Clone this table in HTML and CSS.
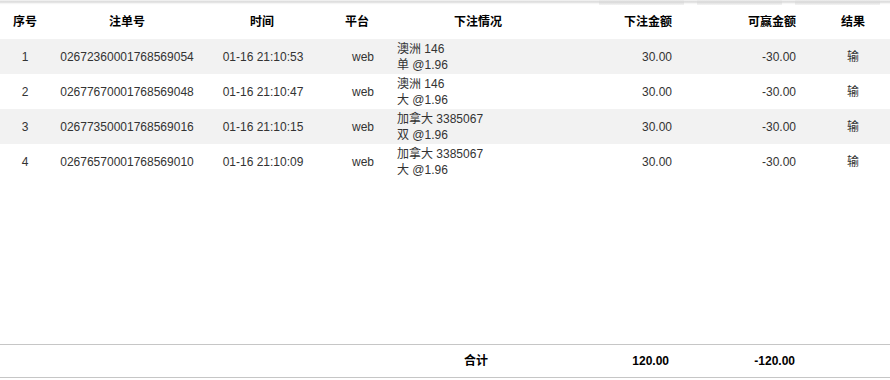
FILE: index.html
```html
<!DOCTYPE html>
<html lang="zh">
<head>
<meta charset="utf-8">
<link rel="stylesheet" href="styles.css">
</head>
<body>
<div class="page">
  <div class="topbar">
    <span class="ghost-btn"></span>
    <span class="ghost-btn"></span>
    <span class="ghost-btn"></span>
  </div>
  <div class="row head">
    <div class="c center">序号</div>
    <div class="c center">注单号</div>
    <div class="c center">时间</div>
    <div class="c center">平台</div>
    <div class="c center">下注情况</div>
    <div class="c right">下注金额</div>
    <div class="c right">可赢金额</div>
    <div class="c center">结果</div>
  </div>
  <div class="row odd">
    <div class="c center">1</div>
    <div class="c center">02672360001768569054</div>
    <div class="c center time">01-16 21:10:53</div>
    <div class="c center plat">web</div>
    <div class="c left">澳洲 146<br>单 @1.96</div>
    <div class="c right">30.00</div>
    <div class="c right">-30.00</div>
    <div class="c center">输</div>
  </div>
  <div class="row">
    <div class="c center">2</div>
    <div class="c center">02677670001768569048</div>
    <div class="c center time">01-16 21:10:47</div>
    <div class="c center plat">web</div>
    <div class="c left">澳洲 146<br>大 @1.96</div>
    <div class="c right">30.00</div>
    <div class="c right">-30.00</div>
    <div class="c center">输</div>
  </div>
  <div class="row odd">
    <div class="c center">3</div>
    <div class="c center">02677350001768569016</div>
    <div class="c center time">01-16 21:10:15</div>
    <div class="c center plat">web</div>
    <div class="c left">加拿大 3385067<br>双 @1.96</div>
    <div class="c right">30.00</div>
    <div class="c right">-30.00</div>
    <div class="c center">输</div>
  </div>
  <div class="row">
    <div class="c center">4</div>
    <div class="c center">02676570001768569010</div>
    <div class="c center time">01-16 21:10:09</div>
    <div class="c center plat">web</div>
    <div class="c left">加拿大 3385067<br>大 @1.96</div>
    <div class="c right">30.00</div>
    <div class="c right">-30.00</div>
    <div class="c center">输</div>
  </div>
  <div class="spacer"></div>
  <div class="row foot">
    <div class="c"></div>
    <div class="c"></div>
    <div class="c"></div>
    <div class="c"></div>
    <div class="c center total">合计</div>
    <div class="c right">120.00</div>
    <div class="c right">-120.00</div>
    <div class="c"></div>
  </div>
  <div class="bottom-gap"></div>
</div>
</body>
</html>
```
FILE: styles.css
```css
html, body {
  margin: 0;
  padding: 0;
  background: #fff;
}
body {
  font-family: "Liberation Sans", "Noto Sans CJK SC", sans-serif;
  font-size: 12px;
  color: #333;
}
.page {
  width: 890px;
  height: 380px;
  display: flex;
  flex-direction: column;
}
.topbar {
  height: 5px;
  flex: none;
  display: flex;
  justify-content: flex-end;
  gap: 13px;
  padding-right: 10px;
  background: linear-gradient(#fafafa 0, #e4e4e4 1px, #d9d9d9 2px, #efefef 3px, #fbfbfb 4px, #fff 5px);
}
.ghost-btn {
  width: 85px;
  height: 5px;
  background: linear-gradient(#f0f0f0 0, #d6d6d6 2px, #e2e2e2 3px, #f4f4f4 5px);
}
.row {
  display: grid;
  grid-template-columns: 50px 154px 116px 74px 168px 128px 126px 74px;
  height: 35px;
  flex: none;
}
.row.head {
  height: 34px;
  color: #000;
  font-weight: bold;
}
.row.odd {
  background: #f2f2f2;
}
.c {
  display: flex;
  align-items: center;
  line-height: 16px;
  white-space: nowrap;
}
.center { justify-content: center; }
.left { justify-content: flex-start; padding-left: 3px; }
.right { justify-content: flex-end; padding-right: 18px; }
.row .c:nth-child(7).right { padding-right: 20px; }
.time { padding-left: 2px; }
.plat { padding-left: 12px; }
.spacer {
  flex: 1;
}
.row.foot {
  height: 32px;
  border-top: 1px solid #c6c6c6;
  border-bottom: 1px solid #c6c6c6;
  color: #000;
  font-weight: bold;
}
.row.foot .c:nth-child(6).right { padding-right: 21px; }
.row.foot .c:nth-child(7).right { padding-right: 21px; }
.total { padding-right: 4px; }
.bottom-gap {
  height: 2px;
  flex: none;
}
```
